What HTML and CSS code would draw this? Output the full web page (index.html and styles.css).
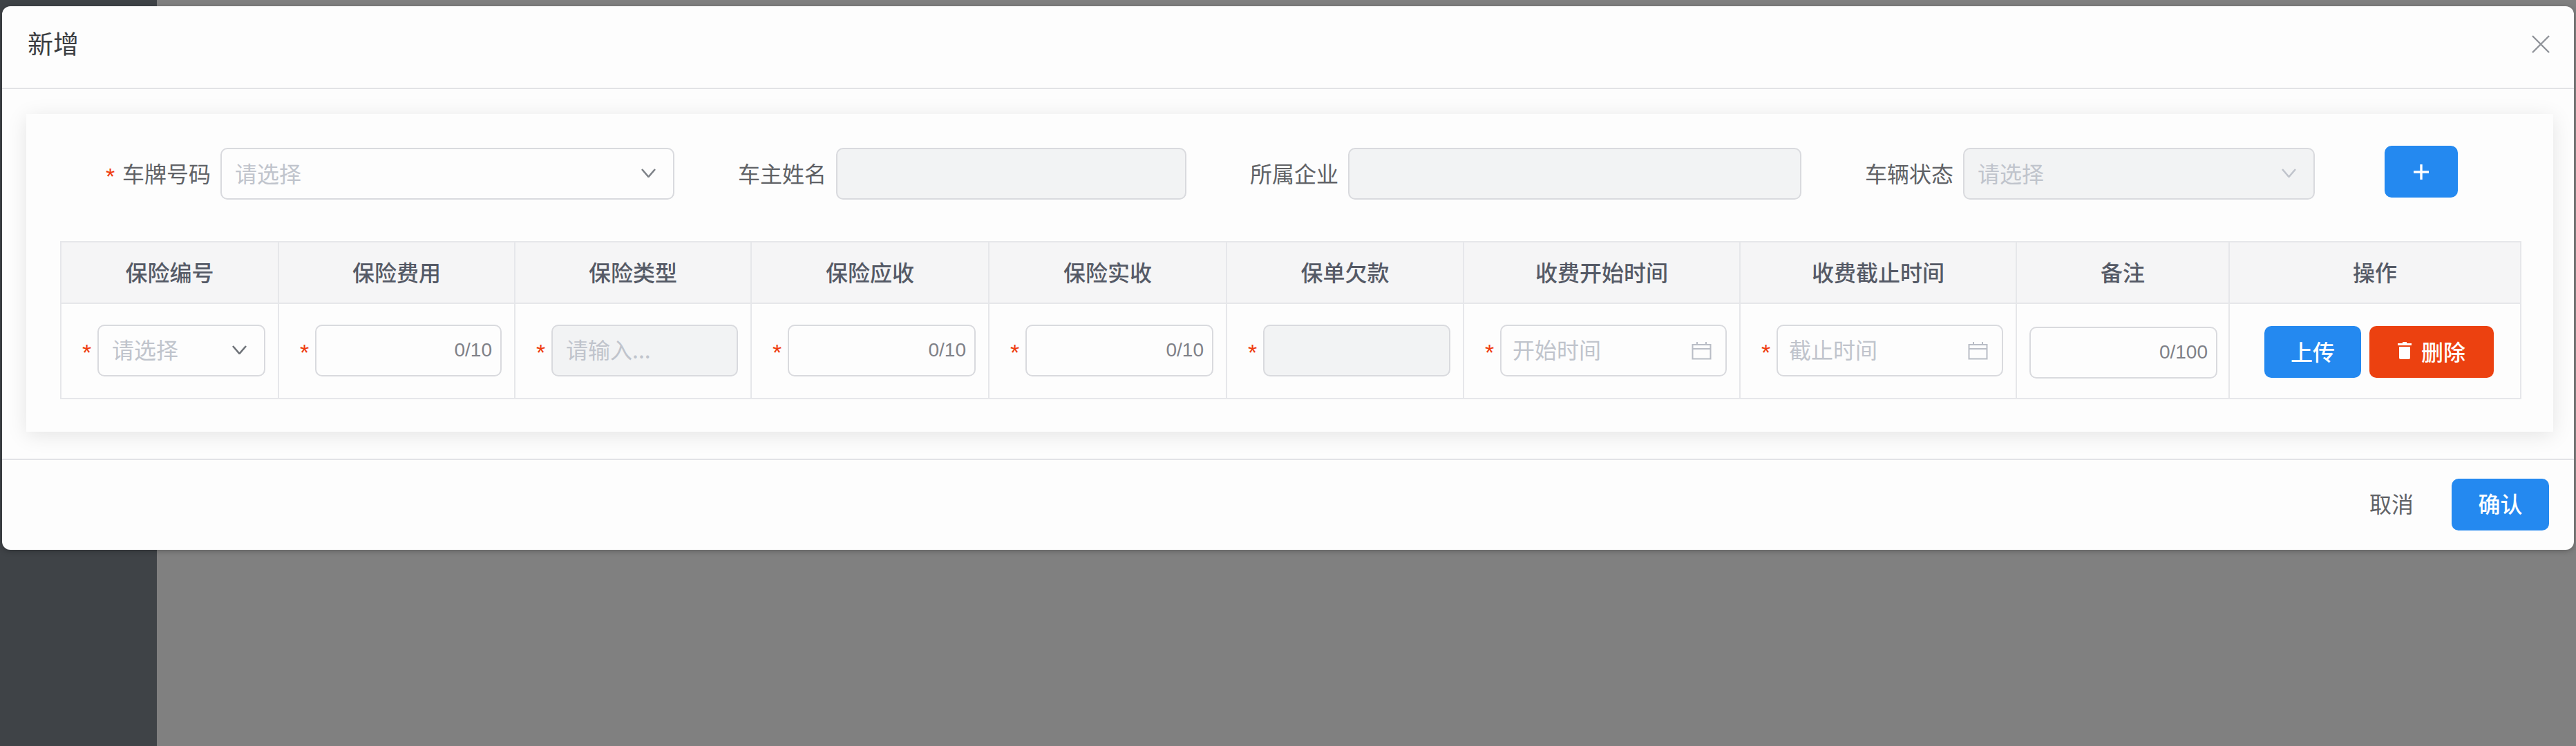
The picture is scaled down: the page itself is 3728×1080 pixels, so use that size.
FILE: index.html
```html
<!DOCTYPE html>
<html lang="zh-CN">
<head>
    <meta charset="UTF-8">
    <title>新增</title>
    <link rel="stylesheet" href="styles.css">
</head>
<body>

<div class="page">
    <div class="sidebar"></div>
    <div class="main"></div>
</div>

<div class="dialog">
    <div class="dialog-header">
        <span class="dialog-title">新增</span>
        <svg class="icon-close" viewBox="0 0 26 26"><path d="M1 1 25 25M25 1 1 25"/></svg>
    </div>

    <div class="dialog-body">
        <div class="card">
            <div class="form-row">
                <div class="form-item">
                    <span class="star">*</span>
                    <label>车牌号码</label>
                    <div class="field w-plate">
                        <span class="placeholder">请选择</span>
                        <svg class="icon-arrow" viewBox="0 0 21 13"><path d="M1 1 10.5 12 20 1"/></svg>
                    </div>
                </div>
                <div class="form-item">
                    <label>车主姓名</label>
                    <div class="field disabled w-owner"></div>
                </div>
                <div class="form-item">
                    <label>所属企业</label>
                    <div class="field disabled w-company"></div>
                </div>
                <div class="form-item">
                    <label>车辆状态</label>
                    <div class="field disabled w-status">
                        <span class="placeholder">请选择</span>
                        <svg class="icon-arrow light" viewBox="0 0 21 13"><path d="M1 1 10.5 12 20 1"/></svg>
                    </div>
                </div>
                <button class="btn btn-blue btn-add">
                    <svg class="icon-plus" viewBox="0 0 22 22"><path d="M11 0V22M0 11H22"/></svg>
                </button>
            </div>

            <table class="ins-table">
                <colgroup>
                    <col class="c1"><col class="c2"><col class="c3"><col class="c4"><col class="c5">
                    <col class="c6"><col class="c7"><col class="c8"><col class="c9"><col class="c10">
                </colgroup>
                <thead>
                    <tr>
                        <th>保险编号</th>
                        <th>保险费用</th>
                        <th>保险类型</th>
                        <th>保险应收</th>
                        <th>保险实收</th>
                        <th>保单欠款</th>
                        <th>收费开始时间</th>
                        <th>收费截止时间</th>
                        <th>备注</th>
                        <th>操作</th>
                    </tr>
                </thead>
                <tbody>
                    <tr>
                        <td><div class="cell">
                            <span class="star">*</span>
                            <div class="field">
                                <span class="placeholder">请选择</span>
                                <svg class="icon-arrow dark" viewBox="0 0 21 13"><path d="M1 1 10.5 12 20 1"/></svg>
                            </div>
                        </div></td>
                        <td><div class="cell">
                            <span class="star">*</span>
                            <div class="field end"><span class="count">0/10</span></div>
                        </div></td>
                        <td><div class="cell">
                            <span class="star">*</span>
                            <div class="field disabled"><span class="placeholder">请输入...</span></div>
                        </div></td>
                        <td><div class="cell">
                            <span class="star">*</span>
                            <div class="field end"><span class="count">0/10</span></div>
                        </div></td>
                        <td><div class="cell">
                            <span class="star">*</span>
                            <div class="field end"><span class="count">0/10</span></div>
                        </div></td>
                        <td><div class="cell">
                            <span class="star">*</span>
                            <div class="field disabled"></div>
                        </div></td>
                        <td><div class="cell">
                            <span class="star">*</span>
                            <div class="field date">
                                <span class="placeholder">开始时间</span>
                                <svg class="icon-date" viewBox="0 0 29 27"><path d="M1.5 5H27.5V25.5H1.5ZM1.5 11H27.5M8 1V5M21 1V5"/></svg>
                            </div>
                        </div></td>
                        <td><div class="cell">
                            <span class="star">*</span>
                            <div class="field date">
                                <span class="placeholder">截止时间</span>
                                <svg class="icon-date" viewBox="0 0 29 27"><path d="M1.5 5H27.5V25.5H1.5ZM1.5 11H27.5M8 1V5M21 1V5"/></svg>
                            </div>
                        </div></td>
                        <td><div class="cell cell-note">
                            <div class="field end"><span class="count">0/100</span></div>
                        </div></td>
                        <td><div class="cell cell-actions">
                            <button class="btn btn-blue btn-upload">上传</button>
                            <button class="btn btn-red btn-delete">
                                <svg class="icon-trash" viewBox="0 0 20 25"><path d="M7 0H13V2H20V5H0V2H7ZM2 7H18V23Q18 25 16 25H4Q2 25 2 23Z"/></svg>
                                删除
                            </button>
                        </div></td>
                    </tr>
                </tbody>
            </table>
        </div>
    </div>

    <div class="dialog-footer">
        <button class="btn-text">取消</button>
        <button class="btn btn-blue btn-confirm">确认</button>
    </div>
</div>

</body>
</html>
```

FILE: styles.css
```css
* {
    box-sizing: border-box;
}
html, body {
    margin: 0;
    height: 1080px;
    overflow: hidden;
}
body {
    font-family: "Noto Sans CJK SC", "Liberation Sans", sans-serif;
    font-size: 32px;
    color: #606266;
}

/* dimmed page behind the dialog */
.page {
    display: flex;
    height: 1080px;
}
.sidebar {
    width: 227px;
    background-color: #3f4347;
}
.main {
    flex: 1;
    background-color: #808080;
}

.dialog {
    position: absolute;
    top: 9px;
    left: 3px;
    width: 3722px;
    height: 787px;
    background-color: #fdfdfd;
    border-radius: 12px;
    box-shadow: 0 2px 8px rgba(0, 0, 0, 0.25);
}
.dialog-header {
    display: flex;
    align-items: center;
    justify-content: space-between;
    height: 120px;
    padding: 0 35px 13px 37px;
    border-bottom: 2px solid #e2e3e6;
}
.dialog-title {
    font-size: 37px;
    color: #3c3e42;
}
.icon-close {
    width: 26px;
    height: 26px;
    margin-bottom: -4px;
    fill: none;
    stroke: #909399;
    stroke-width: 2.4;
}
.dialog-body {
    padding: 36px 30px 39px 35px;
}
.card {
    height: 460px;
    padding: 49px 48px 47px 49px;
    background-color: #fdfdfd;
    box-shadow: 0 5px 28px rgba(0, 0, 0, 0.1);
}

.form-row {
    display: flex;
    align-items: center;
    gap: 92px;
    height: 75px;
    padding-left: 66px;
    margin-bottom: 60px;
}
.form-item {
    display: flex;
    align-items: center;
}
.form-item label {
    margin: 0 14px 4px 0;
    white-space: nowrap;
}
.form-item .star {
    margin-right: 10px;
}
.star {
    flex: none;
    width: 14px;
    font-family: "Liberation Sans", sans-serif;
    font-size: 34px;
    line-height: 20px;
    padding-top: 6px;
    color: #ef3d10;
}

.field {
    display: flex;
    align-items: center;
    justify-content: space-between;
    flex: 1;
    min-width: 0;
    height: 75px;
    padding: 0 20px 0 19px;
    background-color: #fdfdfd;
    border: 2px solid #d9dade;
    border-radius: 10px;
}
.field.disabled {
    background-color: #f2f3f4;
}
.field.end {
    justify-content: flex-end;
    padding-right: 12px;
}
.field.date {
    padding-left: 16px;
}
.w-plate {
    flex: none;
    width: 657px;
}
.w-owner {
    flex: none;
    width: 507px;
}
.w-company {
    flex: none;
    width: 656px;
}
.w-status {
    flex: none;
    width: 509px;
}
.placeholder {
    margin-bottom: 4px;
    color: #c0c4cc;
    white-space: nowrap;
}
.count {
    font-family: "Liberation Sans", sans-serif;
    font-size: 28px;
    color: #7f8188;
}

.icon-arrow {
    flex: none;
    width: 21px;
    height: 13px;
    margin: 0 5px 2px 0;
    fill: none;
    stroke: #7d8187;
    stroke-width: 2.6;
}
.icon-arrow.light {
    stroke: #c0c4cc;
}
.icon-arrow.dark {
    stroke: #6f7379;
}
.icon-date {
    flex: none;
    width: 29px;
    height: 27px;
    fill: none;
    stroke: #b9bdc6;
    stroke-width: 2;
}

.btn {
    display: inline-flex;
    align-items: center;
    justify-content: center;
    height: 75px;
    padding: 0 0 4px;
    border: none;
    border-radius: 10px;
    font-family: inherit;
    font-size: 32px;
    font-weight: 500;
    color: #fff;
}
.btn-blue {
    background-color: #2489f0;
}
.btn-red {
    background-color: #ec4110;
}
.btn-add {
    width: 106px;
    margin-left: 9px;
    margin-top: -6px;
    padding: 0;
}
.icon-plus {
    width: 22px;
    height: 22px;
    fill: none;
    stroke: #fff;
    stroke-width: 3.4;
}
.btn-confirm {
    width: 141px;
}
.btn-text {
    margin-right: 55px;
    padding: 0 0 4px;
    border: none;
    background: none;
    font-family: inherit;
    font-size: 32px;
    color: #606266;
}

.ins-table {
    width: 3560px;
    table-layout: fixed;
    border-collapse: collapse;
}
.ins-table th, .ins-table td {
    border: 2px solid #e6e7ea;
    padding: 0;
}
.ins-table th {
    height: 89px;
    padding-bottom: 4px;
    background-color: #f5f5f6;
    font-weight: 500;
    color: #555a66;
    text-align: center;
}
.ins-table td {
    height: 138px;
}
.c1 { width: 315px; }
.c2 { width: 342px; }
.c3 { width: 342px; }
.c4 { width: 344px; }
.c5 { width: 344px; }
.c6 { width: 343px; }
.c7 { width: 400px; }
.c8 { width: 400px; }
.c9 { width: 308px; }
.c10 { width: 422px; }

.cell {
    display: flex;
    align-items: center;
    gap: 8px;
    padding: 0 18px 2px 30px;
}
.cell-note {
    padding: 4px 16px 0 18px;
}
.cell-actions {
    gap: 12px;
    padding: 3px 0 0 50px;
}
.btn-upload {
    width: 140px;
}
.btn-delete {
    gap: 14px;
    width: 180px;
}
.icon-trash {
    width: 20px;
    height: 25px;
    fill: #fff;
}

.dialog-footer {
    display: flex;
    align-items: center;
    justify-content: flex-end;
    height: 130px;
    padding: 0 36px 0 0;
    border-top: 2px solid #e2e3e6;
}
```
